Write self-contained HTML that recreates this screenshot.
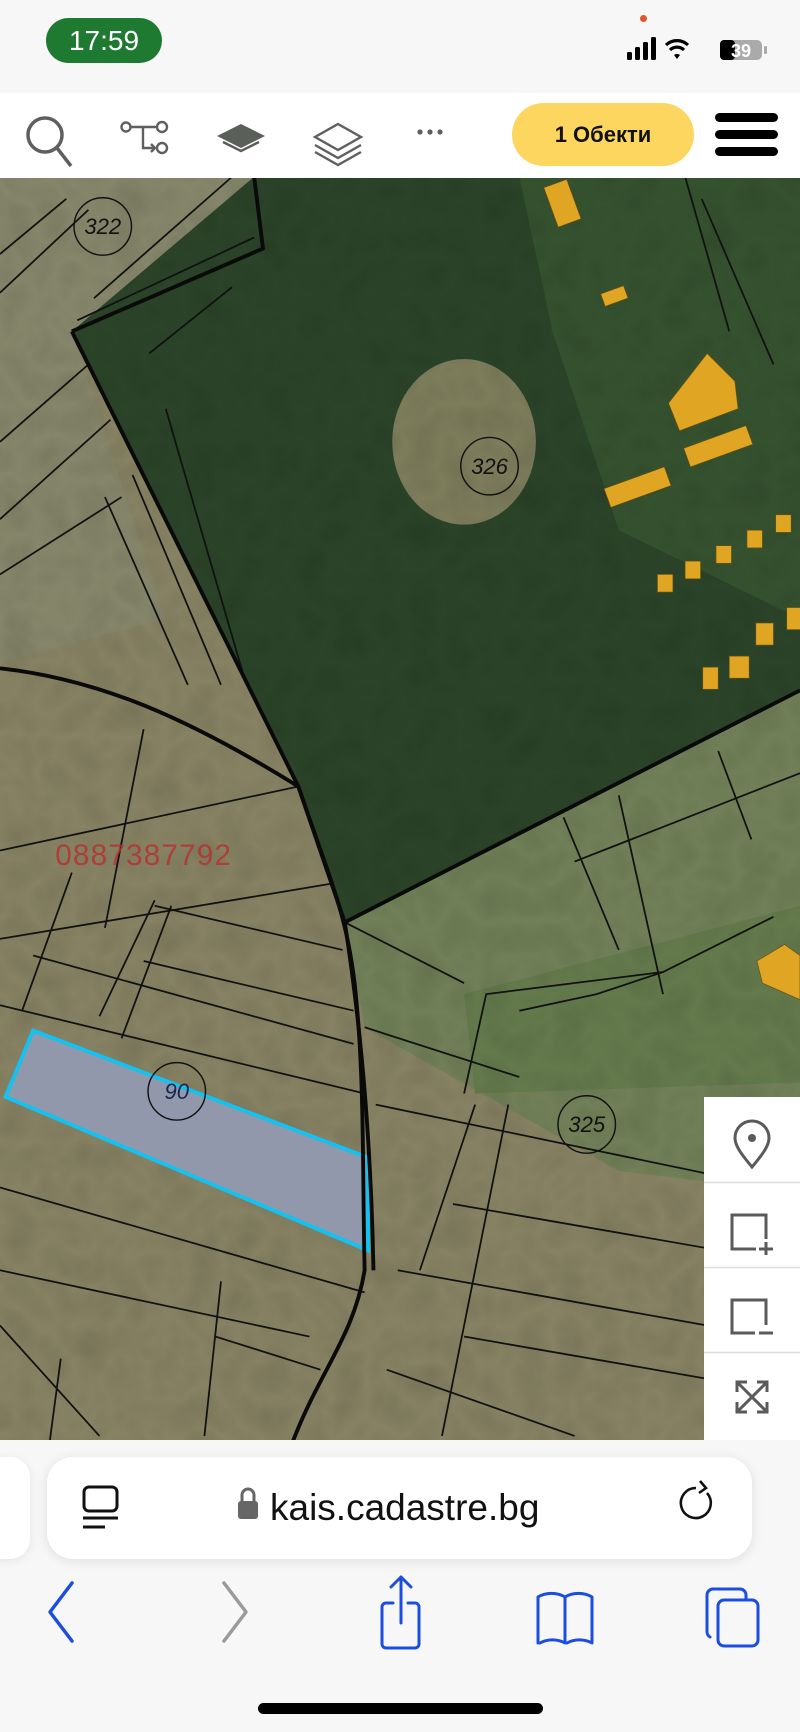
<!DOCTYPE html>
<html><head><meta charset="utf-8">
<style>
html,body{margin:0;padding:0;width:800px;height:1732px;overflow:hidden;background:#f7f7f7;font-family:"Liberation Sans",sans-serif}
.abs{position:absolute}
</style></head><body>
<!-- map -->
<svg class="abs" style="left:0;top:0" width="800" height="1732" viewBox="0 0 724 1568" preserveAspectRatio="none">
<defs>
<filter id="n"><feTurbulence baseFrequency="0.03" numOctaves="2" seed="3"/><feColorMatrix values="0 0 0 0 0  0 0 0 0 0  0 0 0 0 0  0 0 0 0.12 0"/></filter>
</defs>
<rect x="0" y="160" width="724" height="1145" fill="#878263"/>
<polygon points="0,160 230,160 65,300 150,560 0,600" fill="#85866a"/>
<polygon points="312,835 724,625 724,1080 560,1060 330,930" fill="#718058"/>
<polygon points="420,900 724,820 724,980 430,990" fill="#647a4c"/>
<polygon points="65,300 230,160 724,160 724,625 312,835 270,712" fill="#2b4429"/>
<polygon points="470,160 724,160 724,560 560,480 500,300" fill="#35522f"/>
<ellipse cx="420" cy="400" rx="65" ry="75" fill="#7d7d5c"/>
<rect x="0" y="160" width="724" height="1145" filter="url(#n)"/>
<polygon points="30,933 333,1048 333,1132 5,993" fill="#9198ac" stroke="#12c2f0" stroke-width="3.5"/>
<g fill="#e0a623" stroke="#6a5010" stroke-width="0.6">
<rect x="498" y="165" width="22" height="38" transform="rotate(-20 509 184)"/>
<rect x="545" y="262" width="22" height="12" transform="rotate(-20 556 268)"/>
<polygon points="605,365 640,320 665,345 668,370 615,390"/>
<rect x="620" y="395" width="60" height="18" transform="rotate(-20 650 404)"/>
<rect x="548" y="432" width="58" height="18" transform="rotate(-20 577 441)"/>
<rect x="595" y="520" width="14" height="16"/><rect x="620" y="508" width="14" height="16"/><rect x="648" y="494" width="14" height="16"/><rect x="676" y="480" width="14" height="16"/><rect x="702" y="466" width="14" height="16"/>
<rect x="636" y="604" width="14" height="20"/><rect x="660" y="594" width="18" height="20"/><rect x="684" y="564" width="16" height="20"/><rect x="712" y="550" width="14" height="20"/>
<polygon points="685,870 710,855 724,865 724,905 690,890"/>
</g>
<g fill="none" stroke="#111" stroke-width="1.6">
<path d="M0,230 L60,180 M0,265 L80,190 M0,400 L80,330 M0,470 L100,380 M0,520 L110,450 M95,450 L170,620 M120,430 L200,620 M150,370 L220,610"/>
<path d="M135,320 L210,260 M85,270 L210,160 M70,290 L230,215"/>
<path d="M0,770 L270,712 M0,850 L300,800 M130,660 L95,840 M65,790 L20,915 M140,815 L90,920 M155,820 L110,940"/>
<path d="M0,910 L330,990 M30,865 L320,945 M130,870 L320,915 M140,820 L310,860"/>
<path d="M0,1075 L330,1170 M0,1150 L280,1210 M0,1200 L90,1300 M200,1160 L185,1300 M195,1210 L290,1240 M55,1230 L45,1305"/>
<path d="M312,835 L420,890 M330,930 L470,975 M340,1000 L724,1080 M430,1000 L380,1150 M460,1000 L400,1300 M410,1090 L640,1130 M360,1150 L640,1200 M420,1210 L650,1250 M350,1240 L520,1300"/>
<path d="M510,740 L560,860 M560,720 L600,900 M650,680 L680,760 M470,915 L540,900 L600,880 L700,830 M420,990 L440,900 L600,880"/>
<path d="M620,160 L660,300 M635,180 L700,330 M520,780 L724,700"/>
</g>
<g fill="none" stroke="#0a0a0a" stroke-width="3.5">
<path d="M65,300 L238,225 L230,160"/>
<path d="M65,300 L270,712 L312,835 L724,625"/>
<path d="M0,605 C90,615 170,650 270,712"/>
<path d="M270,712 C300,800 315,830 322,900 C330,980 328,1070 330,1150 C320,1210 290,1240 265,1305"/>
<path d="M312,835 C322,900 335,1000 338,1150"/>
</g>
<g fill="none" stroke="#111" stroke-width="1.3">
<circle cx="93" cy="205" r="26"/><circle cx="443" cy="422" r="26"/><circle cx="160" cy="988" r="26"/><circle cx="531" cy="1018" r="26"/>
</g>
<g font-family="Liberation Sans,sans-serif" font-style="italic" font-size="20" fill="#111" text-anchor="middle">
<text x="93" y="212">322</text><text x="443" y="429">326</text><text x="160" y="995" fill="#1a2550">90</text><text x="531" y="1025">325</text>
</g>
<text x="50" y="783" font-family="Liberation Sans,sans-serif" font-size="27" fill="#b73030" fill-opacity="0.8" letter-spacing="1">0887387792</text>
</svg>

<!-- status bar -->
<div class="abs" style="left:0;top:0;width:800px;height:93px;background:#f7f7f7"></div>
<div class="abs" style="left:46px;top:18px;width:116px;height:45px;border-radius:23px;background:#1f7a31;color:#fff;font-size:28px;line-height:45px;text-align:center">17:59</div>
<div class="abs" style="left:640px;top:15px;width:7px;height:7px;border-radius:50%;background:#e0552c"></div>
<svg class="abs" style="left:625px;top:34px" width="150" height="30" viewBox="0 0 150 30">
<rect x="2" y="18" width="5" height="8" rx="1.5"/><rect x="10" y="13" width="5" height="13" rx="1.5"/><rect x="18" y="8" width="5" height="18" rx="1.5"/><rect x="26" y="3" width="5" height="23" rx="1.5"/>
<path d="M41,11 A16,16 0 0 1 63,11" fill="none" stroke="#000" stroke-width="3.2"/><path d="M45,16 A10,10 0 0 1 59,16" fill="none" stroke="#000" stroke-width="3.2"/><path d="M49,21 L52,25 L55,21 A5,5 0 0 0 49,21Z"/>
<rect x="95" y="6" width="42" height="20" rx="5" fill="#aaa"/><rect x="95" y="6" width="15" height="20" rx="4" fill="#000"/><rect x="139" y="12" width="3" height="8" rx="1" fill="#aaa"/>
<text x="116" y="23" font-family="Liberation Sans,sans-serif" font-weight="bold" font-size="18" fill="#fff" text-anchor="middle">39</text>
</svg>

<!-- toolbar -->
<div class="abs" style="left:0;top:93px;width:800px;height:85px;background:#fff"></div>
<svg class="abs" style="left:0;top:93px" width="500" height="85" viewBox="0 0 500 85" fill="none" stroke="#5f5f5f" stroke-width="3.5">
<circle cx="45" cy="42" r="17"/><path d="M57,55 L71,73"/>
<g stroke-width="2.4"><circle cx="126" cy="34" r="4.5"/><circle cx="162" cy="34" r="5"/><circle cx="162" cy="55" r="5"/><path d="M131,34 H157 M143,34 V55 H155 M151,51 L155,55 L151,59"/></g>
<path d="M241,31 L265,43 L241,55 L217,43Z" fill="#5a5f5a" stroke="none"/><path d="M223,49 L241,58 L259,49" stroke-width="2.4" stroke="#5a5f5a"/>
<g stroke-width="2.4"><path d="M338,31 L361,44 L338,57 L315,44Z"/><path d="M315,52 L338,65 L361,52 M315,59 L338,72 L361,59"/></g>
<g fill="#5f5f5f" stroke="none"><circle cx="420" cy="39" r="2.6"/><circle cx="430" cy="39" r="2.6"/><circle cx="440" cy="39" r="2.6"/></g>
</svg>
<div class="abs" style="left:512px;top:103px;width:182px;height:63px;border-radius:32px;background:#fdd660;font-size:22px;font-weight:bold;line-height:63px;text-align:center;color:#111">1 Обекти</div>
<div class="abs" style="left:715px;top:113px;width:63px;height:9px;border-radius:5px;background:#000"></div>
<div class="abs" style="left:715px;top:130px;width:63px;height:9px;border-radius:5px;background:#000"></div>
<div class="abs" style="left:715px;top:147px;width:63px;height:9px;border-radius:5px;background:#000"></div>

<!-- map controls -->
<div class="abs" style="left:704px;top:1097px;width:96px;height:343px;background:#fff"></div>
<svg class="abs" style="left:704px;top:1097px" width="96" height="343" viewBox="0 0 96 343" fill="none" stroke="#5a5a5a" stroke-width="3">
<path d="M0,85.5 H96 M0,170.5 H96 M0,255.5 H96" stroke="#ddd" stroke-width="1.5"/>
<path d="M48,70 C38,58 31,49 31,41 A17,17 0 0 1 65,41 C65,49 58,58 48,70Z"/><circle cx="48" cy="41" r="4" fill="#5a5a5a" stroke="none"/>
<path d="M52,152 H28 V118 H62 V142 M62,145 V158 M55,152 H69"/>
<path d="M51,236 H28 V203 H62 V228 M55,236 H69"/>
<path d="M33,285 L63,315 M63,285 L33,315 M33,295 V285 H43 M53,285 H63 V295 M33,305 V315 H43 M53,315 H63 V305"/>
</svg>

<!-- bottom bar -->
<div class="abs" style="left:0;top:1440px;width:800px;height:292px;background:#f7f7f7"></div>
<div class="abs" style="left:-30px;top:1457px;width:60px;height:102px;border-radius:20px;background:#fff;box-shadow:0 2px 10px rgba(0,0,0,.08)"></div>
<div class="abs" style="left:47px;top:1457px;width:705px;height:102px;border-radius:26px;background:#fff;box-shadow:0 2px 12px rgba(0,0,0,.1)"></div>
<svg class="abs" style="left:47px;top:1457px" width="705" height="102" viewBox="0 0 705 102" fill="none" stroke="#111" stroke-width="3">
<rect x="37" y="30" width="33" height="24" rx="5"/><path d="M36,61 H71 M36,70 H58"/>
<rect x="191" y="44" width="20" height="18" rx="3" fill="#666" stroke="none"/><path d="M195,45 V38 A6,6 0 0 1 207,38 V45" stroke="#666" stroke-width="3"/>
<path d="M660,36 A15,15 0 1 1 649,31 M653,24 L659,31 L652,36" stroke-width="2.6"/>
</svg>
<div class="abs" style="left:270px;top:1479px;font-size:37px;color:#111;line-height:58px;font-family:'Liberation Sans',sans-serif">kais.cadastre.bg</div>
<svg class="abs" style="left:0;top:1575px" width="800" height="80" viewBox="0 0 800 80" fill="none" stroke-width="3.5" stroke-linecap="round" stroke-linejoin="round">
<path d="M72,8 L50,37 L72,66" stroke="#1a4de0"/>
<path d="M224,8 L246,37 L224,66" stroke="#9a9a9a"/>
<g stroke="#1a4de0" stroke-width="3"><path d="M408,28 H415 A4,4 0 0 1 419,32 V69 A4,4 0 0 1 415,73 H401 H386 A4,4 0 0 1 382,69 V32 A4,4 0 0 1 386,28 H393 M401,2 V48 M391,12 L401,2 L411,12"/>
<path d="M538,68 V22 A20,14 0 0 1 565,22 V68 A20,14 0 0 0 540,68 M538,68 V22 M565,22 A20,14 0 0 1 592,22 V68 A20,14 0 0 0 567,68"/>
<rect x="718" y="25" width="40" height="46" rx="6"/><path d="M710,62 A6,6 0 0 1 707,57 V20 A6,6 0 0 1 713,14 H740 A6,6 0 0 1 746,20 V25"/></g>
</svg>
<div class="abs" style="left:258px;top:1703px;width:285px;height:11px;border-radius:6px;background:#000"></div>
</body></html>
